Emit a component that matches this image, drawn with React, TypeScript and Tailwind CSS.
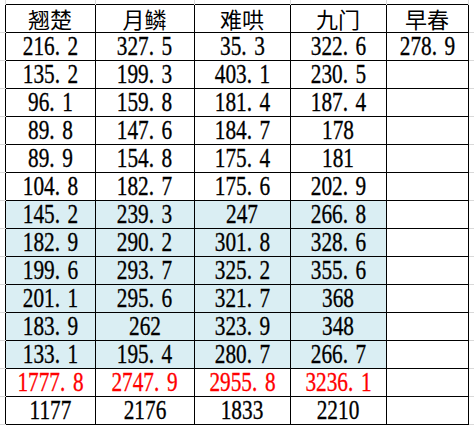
import React from "react";

const headers = ["翘楚", "月鳞", "难哄", "九门", "早春"];

const rows: string[][] = [
  ["216.2", "327.5", "35.3", "322.6", "278.9"],
  ["135.2", "199.3", "403.1", "230.5", ""],
  ["96.1", "159.8", "181.4", "187.4", ""],
  ["89.8", "147.6", "184.7", "178", ""],
  ["89.9", "154.8", "175.4", "181", ""],
  ["104.8", "182.7", "175.6", "202.9", ""],
  ["145.2", "239.3", "247", "266.8", ""],
  ["182.9", "290.2", "301.8", "328.6", ""],
  ["199.6", "293.7", "325.2", "355.6", ""],
  ["201.1", "295.6", "321.7", "368", ""],
  ["183.9", "262", "323.9", "348", ""],
  ["133.1", "195.4", "280.7", "266.7", ""],
  ["1777.8", "2747.9", "2955.8", "3236.1", ""],
  ["1177", "2176", "1833", "2210", ""],
];

function Num({ v }: { v: string }) {
  if (!v) return null;
  const [a, b] = v.split(".");
  return (
    <span className="inline-block scale-x-[0.76] origin-center whitespace-nowrap [-webkit-text-stroke:0.35px_currentcolor]">
      {a}
      {b !== undefined && (
        <>
          <span className="mr-[10px]">.</span>
          {b}
        </>
      )}
    </span>
  );
}

export default function App() {
  return (
    <div className="w-[474px] h-[426px] bg-white overflow-hidden">
      <table className="table-fixed border-collapse w-[474px]">
        <colgroup>
          <col className="w-[5px]" />
          <col className="w-[90px]" />
          <col className="w-[99px]" />
          <col className="w-[96px]" />
          <col className="w-[96px]" />
          <col className="w-[82px]" />
          <col className="w-[6px]" />
        </colgroup>
        <tbody>
          <tr className="h-[4px]">
            <td className="p-0 border-r border-r-[#d9d9d9]"></td>
            <td className="p-0 border-r border-r-[#d9d9d9]"></td>
            <td className="p-0 border-r border-r-[#d9d9d9]"></td>
            <td className="p-0 border-r border-r-[#d9d9d9]"></td>
            <td className="p-0 border-r border-r-[#d9d9d9]"></td>
            <td className="p-0 border-r border-r-[#d9d9d9]"></td>
            <td className="p-0"></td>
          </tr>
          <tr className="h-[28px]">
            <td className="p-0 border-b border-b-[#d9d9d9]"></td>
            {headers.map((h) => (
              <td
                key={h}
                className="p-0 border border-black text-center text-[22px] leading-[26px] text-black [font-family:'Noto_Sans_CJK_SC',sans-serif]"
              >
                {h}
              </td>
            ))}
            <td className="p-0 border-b border-b-[#d9d9d9]"></td>
          </tr>
          {rows.map((r, i) => {
            const blue = i >= 6 && i <= 11;
            const red = i === 12;
            return (
              <tr key={i} className="h-[28px]">
                <td className="p-0 border-b border-b-[#d9d9d9]"></td>
                {r.map((v, j) => (
                  <td
                    key={j}
                    className={
                      "p-0 border border-black text-center text-[28px] leading-[26px] [font-family:'Liberation_Serif',serif] " +
                      (blue && j < 4 ? "bg-[#daeef3] " : "bg-white ") +
                      (red ? "text-[#ff0000]" : "text-black")
                    }
                  >
                    <Num v={v} />
                  </td>
                ))}
                <td className="p-0 border-b border-b-[#d9d9d9]"></td>
              </tr>
            );
          })}
        </tbody>
      </table>
    </div>
  );
}
